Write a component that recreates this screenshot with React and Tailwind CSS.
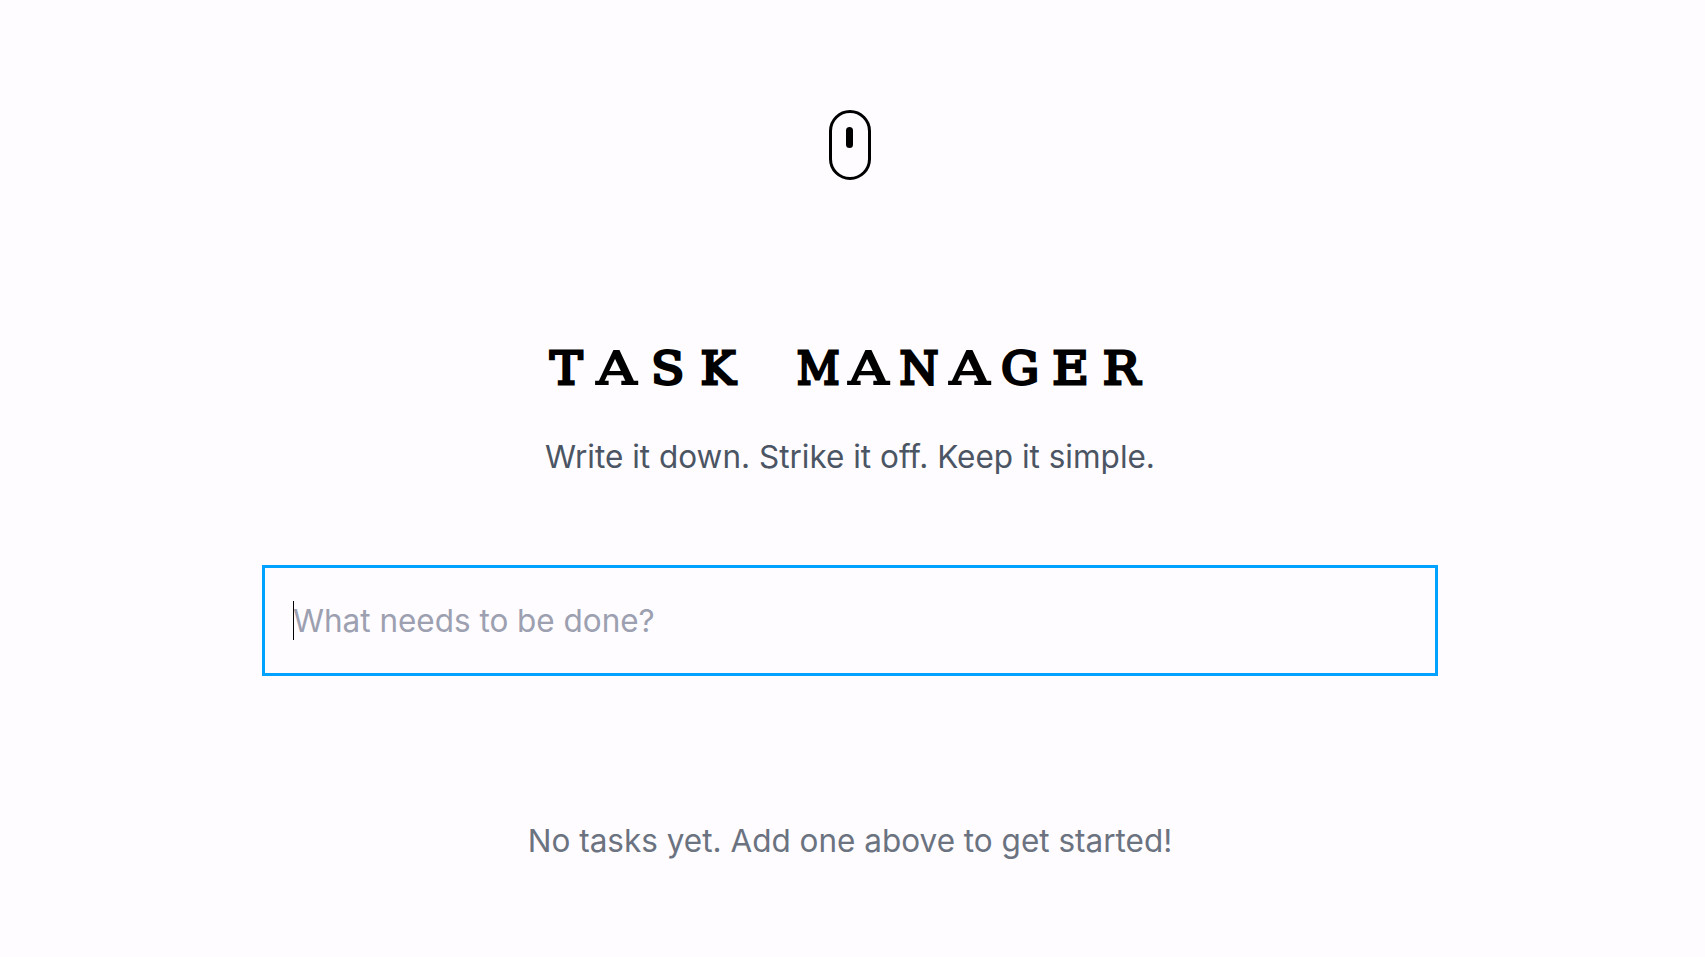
import React from 'react';

// Every letter sits in a fixed-width cell, typewriter style
const TITLE = [
  { char: 'T', fit: 'scale-x-[1.07]' },
  { char: 'A', fit: 'scale-x-[1.22] [-webkit-text-stroke:1.8px_black]' },
  { char: 'S', fit: 'scale-x-[1.07]' },
  { char: 'K', fit: 'scale-x-[1.03]' },
  { char: '\u00a0', fit: '' },
  { char: 'M', fit: 'scale-x-[0.92]' },
  { char: 'A', fit: 'scale-x-[1.22] [-webkit-text-stroke:1.8px_black]' },
  { char: 'N', fit: 'scale-x-[0.98]' },
  { char: 'A', fit: 'scale-x-[1.22] [-webkit-text-stroke:1.8px_black]' },
  { char: 'G', fit: 'scale-x-[1.05]' },
  { char: 'E', fit: 'scale-x-[1.1]' },
  { char: 'R', fit: 'scale-x-[1.08]' },
];

const MouseIcon = () => (
  <div className="flex h-[70px] w-[42px] justify-center rounded-full border-3 border-black pt-3.5 pr-px">
    <div className="h-[21px] w-[7px] rounded-full bg-black" />
  </div>
);

const Title = () => (
  <h1
    aria-label="TASK MANAGER"
    className="mt-[154px] flex h-[70px] w-[605px] font-['DejaVu_Serif'] text-[45.5px] leading-[70px] font-normal text-black [-webkit-text-stroke:2.8px_black]"
  >
    {TITLE.map(({ char, fit }, i) => (
      <span key={i} className="flex w-[50.4px] shrink-0 justify-center pr-[12.6px]">
        <span className={`inline-block ${fit}`}>{char}</span>
      </span>
    ))}
  </h1>
);

const TaskInput = () => {
  const [task, setTask] = React.useState('');

  return (
    <div className="relative mt-[84px] w-full">
      <input
        type="text"
        value={task}
        onChange={(e) => setTask(e.target.value)}
        placeholder="What needs to be done?"
        className="block h-[111px] w-full border-3 border-[#00a2ff] bg-transparent px-7 text-[31.5px] tracking-[-0.02px] text-black caret-transparent outline-none placeholder:text-[#9ca0b0]"
      />
      {/* Caret */}
      {!task && <span className="absolute top-9 left-[31px] h-[39px] w-px bg-black" />}
    </div>
  );
};

export default function App() {
  return (
    <div className="min-h-screen bg-[#fefcff] pr-[5px] font-[Inter,sans-serif] text-[31.5px] leading-[49px]">
      <main className="mx-auto flex w-[1176px] flex-col items-center pt-[110px]">
        <MouseIcon />
        <Title />
        <p className="mt-7 text-[#4b5563]">Write it down. Strike it off. Keep it simple.</p>
        <TaskInput />
        <p className="mt-[140px] text-[#6b7280]">No tasks yet. Add one above to get started!</p>
      </main>
    </div>
  );
}
